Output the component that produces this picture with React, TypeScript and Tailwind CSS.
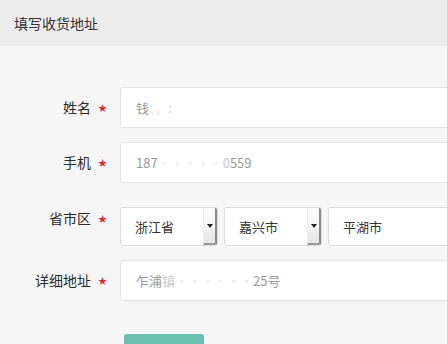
const FONT = "[font-family:'Noto_Sans_CJK_SC','Liberation_Sans',sans-serif]";

const Star = () => (
  <span className="ml-[7px] text-[9px] leading-none text-[#e0262e]">★</span>
);

const Label = ({ text, className = "" }: { text: string; className?: string }) => (
  <div className={`flex w-[120px] shrink-0 items-center justify-end pr-[13px] ${className}`}>
    <span className="text-[14px] text-[#2b2b2b]">{text}</span>
    <Star />
  </div>
);

const Select = ({ value }: { value: string }) => (
  <div className="flex h-[39px] w-[98px] shrink-0 overflow-hidden rounded-[3px] border border-[#dcdcdc] bg-white">
    <div className="flex flex-1 items-center pl-[14px] text-[13px] text-[#333]">{value}</div>
    <div className="flex w-[14px] items-center justify-center border-r-2 border-b-2 border-l border-r-[#8a8a8a] border-b-[#9a9a9a] border-l-[#eee] bg-gradient-to-b from-white to-[#e6e6e6]">
      <span className="h-0 w-0 border-x-[3px] border-t-[4px] border-x-transparent border-t-[#222]" />
    </div>
  </div>
);

export default function App() {
  return (
    <div className={`h-[344px] w-[447px] overflow-hidden bg-[#f6f6f6] ${FONT}`}>
      {/* header */}
      <div className="flex h-[46px] items-center bg-[#ececec] pl-[14px] text-[14px] text-[#333]">
        填写收货地址
      </div>

      <div className="pt-[41px]">
        {/* name */}
        <div className="flex h-[41px] items-center">
          <Label text="姓名" />
          <div className="flex h-[41px] w-[360px] shrink-0 items-center rounded-[3px] border border-[#e3e3e3] bg-white pl-[15px] text-[13px] text-[#999]">
            钱<span className="text-[#ddd]">、、</span><span className="text-[#ccc]">:</span>
          </div>
        </div>

        {/* phone */}
        <div className="mt-[14px] flex h-[41px] items-center">
          <Label text="手机" />
          <div className="flex h-[41px] w-[360px] shrink-0 items-center rounded-[3px] border border-[#e3e3e3] bg-white pl-[15px] text-[13px] text-[#999]">
            187<span className="text-[#ececec]">·····</span><span className="text-[#c8c8c8]">0</span>559
          </div>
        </div>

        {/* region */}
        <div className="mt-[24px] flex h-[39px] items-start">
          <Label text="省市区" className="pt-[1px]" />
          <div className="flex shrink-0 gap-[6px]">
            <Select value="浙江省" />
            <Select value="嘉兴市" />
            <div className="flex h-[39px] w-[150px] items-center rounded-[3px] border border-[#dcdcdc] bg-white pl-[14px] text-[13px] text-[#333]">
              平湖市
            </div>
          </div>
        </div>

        {/* address */}
        <div className="mt-[14px] flex h-[41px] items-center">
          <Label text="详细地址" />
          <div className="flex h-[41px] w-[360px] shrink-0 items-center rounded-[3px] border border-[#e3e3e3] bg-white pl-[15px] text-[13px] text-[#999]">
            乍浦<span className="text-[#ccc]">镇</span><span className="text-[#ececec]">······</span>25号
          </div>
        </div>

        {/* submit */}
        <div className="mt-[33px] pl-[124px]">
          <button className="h-[44px] w-[80px] rounded-[3px] bg-[#6bbfae] text-[14px] text-white">
            保存
          </button>
        </div>
      </div>
    </div>
  );
}
